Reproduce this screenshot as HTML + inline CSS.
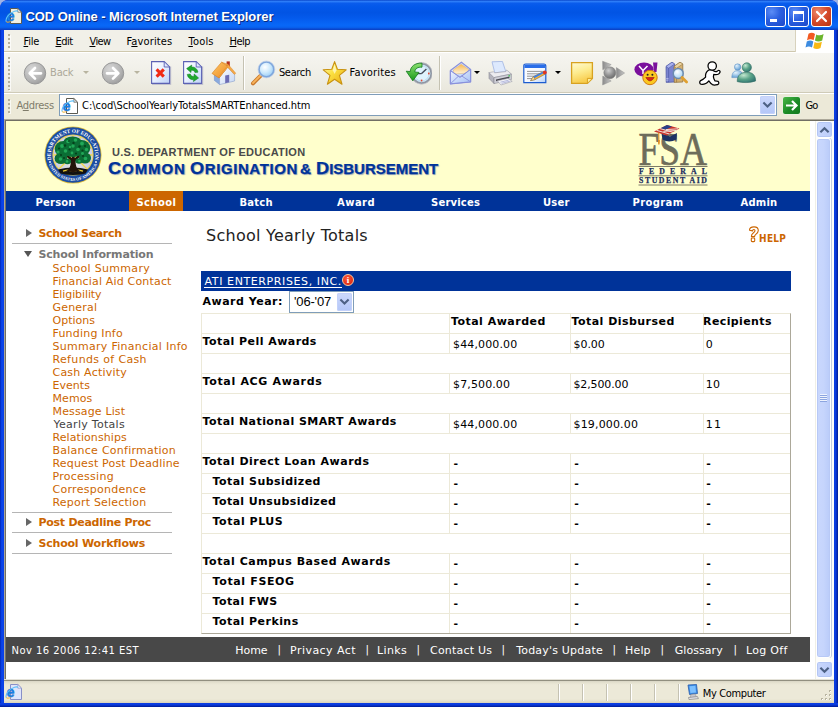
<!DOCTYPE html>
<html><head><meta charset="utf-8"><title>COD Online</title>
<style>
*{box-sizing:border-box;margin:0;padding:0}
html,body{width:838px;height:707px;overflow:hidden;background:#9fb4e6}
body{position:relative;font-family:"Liberation Sans",sans-serif;font-size:11px;color:#000}
.abs{position:absolute}
#win{position:absolute;left:0;top:0;width:838px;height:707px;background:#0831d9;overflow:hidden;border-radius:8px 8px 0 0}
#titlebar{position:absolute;left:0;top:0;width:838px;height:30px;border-radius:8px 8px 0 0;
 background:linear-gradient(180deg,#0a48cc 0%,#2c7cf8 5%,#0a5cec 11%,#0358ea 22%,#0254e4 42%,#045aec 60%,#0868f8 84%,#0862f0 91%,#0a4cd4 96%,#0a3ec2 100%)}
#title{position:absolute;left:26px;top:8px;font:bold 13px "Liberation Sans",sans-serif;color:#fff;text-shadow:1px 1px 0 #0a2a7a;white-space:nowrap;letter-spacing:.1px}
.tb{position:absolute;top:6px;width:21px;height:21px;border:1px solid #fff;border-radius:3px;
 background:radial-gradient(circle at 30% 25%,#5c8df6 0%,#2a5fe0 45%,#1c48c8 100%)}
.tb.close{background:radial-gradient(circle at 30% 25%,#ee8a6c 0%,#d5492a 50%,#b8330f 100%)}
#chrome{position:absolute;left:4px;top:30px;width:830px;height:90px;background:#ece9d8}
#menubar{position:absolute;left:0;top:0;width:830px;height:22px;background:#f1f0e8;border-bottom:1px solid #cfc8ae}
.mi{position:absolute;top:5px;font-size:11px;white-space:nowrap}
.mi u{text-decoration:underline}
#toolbar{position:absolute;left:0;top:22px;width:830px;height:41px;background:linear-gradient(to bottom,#f6f5f0,#efeee6 60%,#e9e7dc);border-top:1px solid #fff;border-bottom:1px solid #cfcbb8}
#addrbar{position:absolute;left:0;top:63px;width:830px;height:25px;background:#ece9d8;border-top:1px solid #fff}
.grip{position:absolute;width:2px;margin-left:1px;background:repeating-linear-gradient(to bottom,#b4af9b 0,#b4af9b 2px,transparent 2px,transparent 4px);box-shadow:1px 1px 0 rgba(255,255,255,.7)}
#page{position:absolute;left:6px;top:121px;width:810px;height:558px;background:#fff;overflow:hidden;font-family:"DejaVu Sans","Liberation Sans",sans-serif}
#statusbar{position:absolute;left:4px;top:682px;width:830px;height:21px;background:#ece9d8;border-top:1px solid #fff}

#pw{position:absolute;left:-6px;top:-121px;width:838px;height:707px}
.nav{position:absolute;top:191px;height:20px;line-height:20px;width:100px;text-align:center;color:#fff;font-weight:bold;font-size:11px}
.sm{position:absolute;font-size:11px;color:#c60;white-space:nowrap;line-height:13px;letter-spacing:.45px}
.sh{position:absolute;font-size:11px;font-weight:bold;color:#c60;white-space:nowrap;line-height:13px;letter-spacing:.3px}
.sl{position:absolute;left:12px;width:160px;height:1px;background:#b5b5b5}
.tri{position:absolute;width:0;height:0}
.hl{position:absolute;left:202px;width:588px;height:1px;background:#ece9d8}
.vl{position:absolute;width:1px;background:#ece9d8}
.rl{position:absolute;font-size:11px;font-weight:bold;white-space:nowrap;line-height:13px;letter-spacing:.75px}
.rv{position:absolute;font-size:11px;white-space:nowrap;line-height:13px;letter-spacing:.3px}
.ft{position:absolute;top:643px;font-size:11px;color:#fff;white-space:nowrap;line-height:13px;letter-spacing:.55px}

.nv{position:absolute;color:#fff;font-weight:bold;font-size:10px;line-height:13px;white-space:nowrap}
.h1{position:absolute;font-size:16px;color:#222;white-space:nowrap;line-height:20px}
.ati{position:absolute;font-size:11px;color:#fff;white-space:nowrap;line-height:13px}

.ch{position:absolute;font:11px/13px "DejaVu Sans Condensed","Liberation Sans",sans-serif;font-variant-ligatures:none;white-space:nowrap;color:#000}
.ttl{position:absolute;font:bold 13px/15px "Liberation Sans",sans-serif;color:#fff;text-shadow:1px 1px 0 #0a2a7a;white-space:nowrap}
.dept{position:absolute;font:bold 11px/13px "Liberation Sans",sans-serif;color:#4a4a4a;white-space:nowrap}
.cod{position:absolute;font:bold 14px/20px "Liberation Sans",sans-serif;color:#003399;white-space:nowrap;text-shadow:1px 1px 1px #9fa9b8;transform:scaleX(1.07);transform-origin:0 0;-webkit-text-stroke:.25px #003399}
.cod b{font-size:17px}
.hlp{position:absolute;font:bold 10px/12px "DejaVu Sans Condensed","Liberation Sans",sans-serif;color:#cc6600;white-space:nowrap}
.sel{position:absolute;font:13px/15px "Liberation Sans",sans-serif;white-space:nowrap;color:#000}
</style></head><body>
<div id="win">
 <div id="titlebar">
  <div class="tb" style="left:765px"></div>
  <div class="tb" style="left:788px"></div>
  <div class="tb close" style="left:811px"></div>
 </div>
 <div id="chrome">
  <div id="menubar">
   <div class="grip" style="left:3px;top:4px;height:15px"></div>
   <div class="abs" style="left:791px;top:0;width:39px;height:22px;background:#fff;border-left:1px solid #d8d2bd">
    <svg class="abs" style="left:9px;top:1px" width="22" height="20" viewBox="0 0 22 20">
     <path d="M3.5 2.8 C6 1.2 8 1.6 10 3 L8.6 9.2 C6.6 7.9 4.6 7.7 2 9.2 Z" fill="#f25a22"/>
     <path d="M11.3 3.4 C13.5 4.8 16 4.6 18.6 3 L17.2 9.4 C14.6 11 12.2 10.8 9.9 9.6 Z" fill="#6cb52d"/>
     <path d="M1.8 10.4 C4.4 8.9 6.4 9.2 8.3 10.4 L7 16.4 C5 15.2 3 15 0.5 16.4 Z" fill="#3c8be0"/>
     <path d="M9.6 10.9 C11.9 12.1 14.3 12.2 16.9 10.7 L15.5 16.9 C13 18.4 10.6 18.2 8.3 17 Z" fill="#f9b812"/>
    </svg>
   </div>
  </div>
  <div id="toolbar">
   <div class="grip" style="left:3px;top:4px;height:33px"></div>
   <!-- back -->
   <svg class="abs" style="left:19px;top:8px" width="24" height="24" viewBox="0 0 24 24">
    <defs><radialGradient id="gb" cx="35%" cy="30%" r="75%"><stop offset="0" stop-color="#d6d6d6"/><stop offset="0.7" stop-color="#b4b4b4"/><stop offset="1" stop-color="#9c9c9c"/></radialGradient></defs>
    <circle cx="12" cy="12.3" r="10.7" fill="url(#gb)" stroke="#979797" stroke-width="1"/>
    <path d="M18 12.3 H7.5 M12 7 L6.7 12.3 L12 17.6" fill="none" stroke="#fff" stroke-width="2.7" stroke-linecap="round" stroke-linejoin="round"/>
   </svg>
   <div class="abs" style="left:79px;top:18px;border:3px solid transparent;border-top:3px solid #b8b4a0;width:0;height:0"></div>
   <!-- forward -->
   <svg class="abs" style="left:97px;top:8px" width="24" height="24" viewBox="0 0 24 24">
    <circle cx="12" cy="12.3" r="10.7" fill="url(#gb)" stroke="#979797" stroke-width="1"/>
    <path d="M6 12.3 H16.5 M12 7 L17.3 12.3 L12 17.6" fill="none" stroke="#fff" stroke-width="2.7" stroke-linecap="round" stroke-linejoin="round"/>
   </svg>
   <div class="abs" style="left:130px;top:18px;border:3px solid transparent;border-top:3px solid #b8b4a0;width:0;height:0"></div>
   <!-- stop -->
   <svg class="abs" style="left:146px;top:7px" width="22" height="26" viewBox="0 0 22 26">
    <defs><linearGradient id="gpg" x1="0" y1="0" x2="1" y2="1"><stop offset="0" stop-color="#ffffff"/><stop offset=".5" stop-color="#e8f0ff"/><stop offset="1" stop-color="#bcd0f6"/></linearGradient></defs>
    <path d="M2 24.4 H20.6 V6.4" fill="none" stroke="#b8b8c8" stroke-width="1.2" opacity=".8"/>
    <path d="M1.6 1.6 H14.2 L19.6 7 V23.4 H1.6 Z" fill="url(#gpg)" stroke="#5c62b4" stroke-width="1.1"/>
    <path d="M14.2 1.6 V7 H19.6 Z" fill="#dfe8fb" stroke="#5c62b4" stroke-width=".9"/>
    <path d="M6.6 9.4 L13.8 16.6 M13.8 9.4 L6.6 16.6" stroke="#f02a14" stroke-width="3.1" stroke-linecap="butt"/>
   </svg>
   <!-- refresh -->
   <svg class="abs" style="left:178px;top:7px" width="22" height="26" viewBox="0 0 22 26">
    <path d="M2 24.4 H20.6 V6.4" fill="none" stroke="#b8b8c8" stroke-width="1.2" opacity=".8"/>
    <path d="M1.6 1.6 H14.2 L19.6 7 V23.4 H1.6 Z" fill="url(#gpg)" stroke="#5c62b4" stroke-width="1.1"/>
    <path d="M14.2 1.6 V7 H19.6 Z" fill="#dfe8fb" stroke="#5c62b4" stroke-width=".9"/>
    <path d="M16 12.2 C15.4 8.6 12.4 6.6 9.4 7 L9.8 5 L4.6 8.6 L9 12.6 L9.2 10.2 C11 10 12.4 10.8 13 12.6 Z" fill="#1ea82c" stroke="#0c7a1a" stroke-width=".5"/>
    <path d="M5.2 14.4 C5.8 18 8.8 20 11.8 19.6 L11.4 21.6 L16.6 18 L12.2 14 L12 16.4 C10.2 16.6 8.8 15.8 8.2 14 Z" fill="#1ea82c" stroke="#0c7a1a" stroke-width=".5"/>
   </svg>
   <!-- home -->
   <svg class="abs" style="left:207px;top:6px" width="26" height="28" viewBox="0 0 26 28">
    <defs><linearGradient id="grf" x1="0" y1="0" x2="1" y2="1"><stop offset="0" stop-color="#fdc868"/><stop offset="1" stop-color="#ee8a22"/></linearGradient>
    <linearGradient id="gwl" x1="0" y1="0" x2="1" y2="1"><stop offset="0" stop-color="#ffffff"/><stop offset="1" stop-color="#c4d6f4"/></linearGradient></defs>
    <rect x="15.6" y="2.4" width="3.2" height="6" fill="#b4301c"/>
    <path d="M3.4 14.6 L8.6 18 V25.6 L3.4 21.4 Z" fill="#8aaade" stroke="#6a88c4" stroke-width=".5"/>
    <path d="M8.6 18 L16.6 8 L23.6 15.4 V22 L8.6 25.6 Z" fill="url(#gwl)" stroke="#8aa0cc" stroke-width=".6"/>
    <path d="M14.2 24.2 V16.6 L18.2 15.8 V23.2 Z" fill="#6c6cb4"/>
    <path d="M1 14.4 L10.6 3.2 L17 7.4 L8 19 Z" fill="url(#grf)" stroke="#d8801c" stroke-width=".6"/>
    <path d="M10.6 3.2 L17 5.2 L24.8 14.2 L23.4 15.6 L16.8 8.4 L8 19 L7.4 18.2 L16.6 6.8 Z" fill="#f4a848" stroke="#d8801c" stroke-width=".4"/>
   </svg>
   <div class="abs" style="left:239px;top:3px;width:1px;height:34px;background:#c5c2b2;border-right:1px solid #fff;box-sizing:content-box"></div>
   <!-- search -->
   <svg class="abs" style="left:246px;top:7px" width="26" height="26" viewBox="0 0 26 26">
    <defs><radialGradient id="gln" cx="40%" cy="35%" r="65%"><stop offset="0" stop-color="#ffffff"/><stop offset=".55" stop-color="#cfeafc"/><stop offset="1" stop-color="#9fd0f6"/></radialGradient></defs>
    <path d="M3 23.4 L11.4 14.8" stroke="#c8782c" stroke-width="4" stroke-linecap="round"/>
    <path d="M3 23 L11 15" stroke="#f8b45c" stroke-width="1.8" stroke-linecap="round"/>
    <circle cx="16.4" cy="9.4" r="7.4" fill="url(#gln)" stroke="#7ea6dc" stroke-width="1.7"/>
    <circle cx="16.4" cy="9.4" r="8.4" fill="none" stroke="#b4c8e8" stroke-width=".6"/>
   </svg>
   <!-- favorites -->
   <svg class="abs" style="left:318px;top:7px" width="26" height="26" viewBox="0 0 26 26">
    <defs><linearGradient id="gst" x1="0" y1="0" x2="1" y2="1"><stop offset="0" stop-color="#fff9b8"/><stop offset=".45" stop-color="#fbe040"/><stop offset="1" stop-color="#e8a810"/></linearGradient></defs>
    <path d="M12.6 1.6 L15.4 9.2 L24.2 9.8 L17.4 15.4 L20 24.2 L12.6 19.2 L5.4 24.2 L8 15.4 L1.2 9.8 L9.8 9.2 Z" fill="url(#gst)" stroke="#c89212" stroke-width="1.1" stroke-linejoin="round"/>
    <path d="M12.6 4.6 L14.4 10.2 L12.6 14 L10.8 10.2 Z" fill="#fffde0" opacity=".7"/>
   </svg>
   <!-- history -->
   <svg class="abs" style="left:400px;top:8px" width="28" height="25" viewBox="0 0 28 25">
    <defs><linearGradient id="gha" x1="0" y1="0" x2="0" y2="1"><stop offset="0" stop-color="#8ce070"/><stop offset="1" stop-color="#179a1c"/></linearGradient></defs>
    <circle cx="17.6" cy="12.4" r="9.8" fill="#d0ecfb" stroke="#9097a4" stroke-width="2"/>
    <circle cx="17.6" cy="12.4" r="10.8" fill="none" stroke="#c8c8cc" stroke-width=".7"/>
    <circle cx="17.6" cy="12.4" r="7.6" fill="#dff2fd" stroke="#b8d4ec" stroke-width=".8"/>
    <path d="M17.6 12.6 L22.4 8 M17.6 12.6 L13.6 12.6" stroke="#444a58" stroke-width="1.4"/>
    <rect x="24" y="11.6" width="1.6" height="1.8" fill="#e8482c"/><rect x="16.8" y="18.6" width="1.6" height="1.8" fill="#e8482c"/>
    <path d="M18 2.2 C10.6 1.6 6.4 6 6.2 10.6 L2.2 10.2 L8.8 19.8 L15 11.4 L10.8 11 C11 7.8 13.6 5.8 18 6.2 Z" fill="url(#gha)" stroke="#117a1c" stroke-width=".8" stroke-linejoin="round"/>
   </svg>
   <div class="abs" style="left:435px;top:3px;width:1px;height:34px;background:#c5c2b2;border-right:1px solid #fff;box-sizing:content-box"></div>
   <!-- mail -->
   <svg class="abs" style="left:445px;top:8px" width="23" height="24" viewBox="0 0 23 24">
    <defs><linearGradient id="gml" x1="0" y1="0" x2="1" y2="1"><stop offset="0" stop-color="#f2f6ff"/><stop offset="1" stop-color="#a6c2f6"/></linearGradient>
    <linearGradient id="gmp" x1="0" y1="0" x2="0" y2="1"><stop offset="0" stop-color="#f8b850"/><stop offset="1" stop-color="#fff4dc"/></linearGradient></defs>
    <path d="M1.4 9.6 L12.4 1.2 L21.6 8.4 V20.8 L1.4 22.8 Z" fill="url(#gml)" stroke="#8890dc" stroke-width="1.2" stroke-linejoin="round"/>
    <path d="M4.4 8.8 L12.2 3.2 L19.4 8.2 L19 12 L5 13 Z" fill="url(#gmp)" stroke="#d8b070" stroke-width=".5"/>
    <path d="M1.4 9.6 L11 16.4 L21.6 8.4" fill="none" stroke="#8890dc" stroke-width="1.1"/>
    <path d="M1.4 9.6 L11 16.4 L21.6 8.4 V20.8 L1.4 22.8 Z" fill="url(#gml)" stroke="#8890dc" stroke-width="1" stroke-linejoin="round" opacity=".92"/>
    <path d="M1.4 22.8 L9.4 15.2 M21.6 20.8 L12.8 15" fill="none" stroke="#8890dc" stroke-width=".9"/>
   </svg>
   <div class="abs" style="left:470px;top:18px;border:3px solid transparent;border-top:3px solid #000;width:0;height:0"></div>
   <!-- print -->
   <svg class="abs" style="left:483px;top:8px" width="26" height="25" viewBox="0 0 26 25">
    <path d="M5 0.8 L15.4 0.4 L18.8 10.6 L7.8 11.8 Z" fill="#dde9fd" stroke="#9fb4e2" stroke-width=".8"/>
    <path d="M2 11.6 L7 16.6 V22.6 L2 17.4 Z" fill="#b4b4be" stroke="#8a8a94" stroke-width=".6"/>
    <path d="M2 11.6 L6.4 10.8 L7.8 11.8 L18.8 10.6 L19.6 9 L24.4 13 L7 16.6 Z" fill="#ececf0" stroke="#9a9aa4" stroke-width=".6"/>
    <path d="M7 16.6 L24.4 13 V18.6 L7 22.6 Z" fill="#d0d0d8" stroke="#8a8a94" stroke-width=".6"/>
    <path d="M9 18.4 L22.4 15.6 V17.2 L9 20.2 Z" fill="#4a4a52"/>
    <path d="M10.4 19.8 L21 17.4 L25.2 20.4 L14 24 Z" fill="#f6f6fa" stroke="#9a9aa4" stroke-width=".6"/>
    <path d="M13.4 21.2 L21.6 19.2 M14.6 22.4 L22.8 20.2" stroke="#8890c8" stroke-width=".6"/>
    <rect x="21.4" y="14.2" width="1.8" height="1.2" fill="#3bc04a"/>
   </svg>
   <!-- edit -->
   <svg class="abs" style="left:519px;top:10px" width="26" height="21" viewBox="0 0 26 21">
    <defs><linearGradient id="ged" x1="0" y1="0" x2="1" y2="1"><stop offset="0" stop-color="#ffffff"/><stop offset=".6" stop-color="#f2f7ff"/><stop offset="1" stop-color="#b4d0f8"/></linearGradient></defs>
    <path d="M0.8 19.6 V3 Q0.8 1 2.8 1 H20.8 Q22.8 1 22.8 3 V19.6 Z" fill="url(#ged)" stroke="#1c5cd0" stroke-width="1.2"/>
    <path d="M1.4 5 V3 Q1.4 1.6 2.8 1.6 H20.8 Q22.2 1.6 22.2 3 V5 Z" fill="#2a6ee8"/>
    <path d="M4 8.4 H19.6 M4 10.8 H19.6 M4 13.2 H13 M4 15.6 H9" stroke="#8a8a8a" stroke-width=".9"/>
    <path d="M7.6 17.6 L10.4 13.6 L20.6 8.4 L22.2 11.2 L12.2 16.6 Z" fill="#f4b43c" stroke="#7a5a20" stroke-width=".5"/>
    <path d="M10.4 13.6 L20.6 8.4 L21.4 9.8 L11.2 15.2 Z" fill="#3a80ec"/>
    <path d="M7.6 17.6 L10.4 13.6 L12.2 16.6 Z" fill="#f8dca0" stroke="#7a5a20" stroke-width=".4"/>
    <circle cx="21.8" cy="9.4" r="1.9" fill="#e03420"/>
   </svg>
   <div class="abs" style="left:551px;top:18px;border:3px solid transparent;border-top:3px solid #000;width:0;height:0"></div>
   <!-- note -->
   <svg class="abs" style="left:566px;top:8px" width="24" height="24" viewBox="0 0 24 24">
    <defs><linearGradient id="gn" x1="0" y1="0" x2="0.3" y2="1"><stop offset="0" stop-color="#fffbd4"/><stop offset=".5" stop-color="#fdec90"/><stop offset="1" stop-color="#f8cc4c"/></linearGradient></defs>
    <path d="M1.6 1.6 H22.4 V17.4 L17.4 22.4 H1.6 Z" fill="url(#gn)" stroke="#d8a220" stroke-width="1.3"/>
    <path d="M22.4 17.4 H17.4 V22.4 Z" fill="#fdeea0" stroke="#d8a220" stroke-width="1"/>
   </svg>
   <!-- gray messenger -->
   <svg class="abs" style="left:597px;top:7px" width="25" height="26" viewBox="0 0 25 26">
    <defs><radialGradient id="gm" cx="40%" cy="32%" r="70%"><stop offset="0" stop-color="#d0d0d0"/><stop offset=".6" stop-color="#8e8e8e"/><stop offset="1" stop-color="#6a6a6a"/></radialGradient>
    <linearGradient id="gmt" x1="0" y1="0" x2="1" y2="0"><stop offset="0" stop-color="#8a8a8a"/><stop offset="1" stop-color="#c8c8c8"/></linearGradient></defs>
    <path d="M1.6 1.2 L10.2 4.6 L1.8 9.8 Z" fill="url(#gmt)" stroke="#909090" stroke-width=".5"/>
    <path d="M1.8 16 L10.2 21 L1.6 25 Z" fill="url(#gmt)" stroke="#909090" stroke-width=".5"/>
    <path d="M15.4 7.6 L23.6 13 L15.4 18.4 Z" fill="url(#gmt)" stroke="#909090" stroke-width=".5"/>
    <circle cx="8.8" cy="12.8" r="6" fill="url(#gm)" stroke="#787878" stroke-width=".5"/>
   </svg>
   <!-- yahoo -->
   <svg class="abs" style="left:630px;top:9px" width="25" height="24" viewBox="0 0 25 24">
    <ellipse cx="10" cy="7.5" rx="9.6" ry="7" fill="#7a0f9c"/>
    <path d="M19 0.5 H23.5 L22.5 10 H20 Z" fill="#7a0f9c"/>
    <path d="M5 4 L9 8.5 V12 M13.5 4 L9 8.5" stroke="#fff" stroke-width="1.5" fill="none"/>
    <circle cx="16" cy="15.5" r="7.2" fill="#fbc820" stroke="#d07810" stroke-width="1"/>
    <path d="M11.8 15.5 Q16 22.5 20.2 15.5 Z" fill="#d82818" stroke="#801" stroke-width=".5"/>
    <circle cx="13.6" cy="12.8" r="1" fill="#222"/><circle cx="18.4" cy="12.8" r="1" fill="#222"/>
   </svg>
   <!-- research -->
   <svg class="abs" style="left:661px;top:8px" width="24" height="24" viewBox="0 0 24 24">
    <defs><radialGradient id="grl" cx="40%" cy="35%" r="65%"><stop offset="0" stop-color="#ffffff"/><stop offset="1" stop-color="#a8d4f4"/></radialGradient></defs>
    <path d="M1 5.4 L7 1.2 L9.6 3 V21 L1.2 21.4 Z" fill="#7a84d0" stroke="#4a54a0" stroke-width=".7"/>
    <path d="M1 5.4 L7 1.2 L9.6 3 L3.6 7.2 Z" fill="#a8b0ec" stroke="#4a54a0" stroke-width=".5"/>
    <path d="M3.6 7.2 V21.2" stroke="#4a54a0" stroke-width=".6"/><path d="M1.2 17.6 L3.6 17.4 M1.2 19.2 L3.6 19" stroke="#c8ccf4" stroke-width=".7"/>
    <path d="M9 5.4 L15 1.2 L17.8 3 V21 L9.2 21.4 Z" fill="#d4b070" stroke="#8a6c38" stroke-width=".7"/>
    <path d="M9 5.4 L15 1.2 L17.8 3 L11.6 7.2 Z" fill="#ecd4a0" stroke="#8a6c38" stroke-width=".5"/>
    <path d="M11.6 7.2 V21.2" stroke="#8a6c38" stroke-width=".6"/>
    <circle cx="13.2" cy="12.4" r="5" fill="url(#grl)" stroke="#6c8cb0" stroke-width="1.5"/>
    <path d="M17 16.4 L21.6 21" stroke="#e0a030" stroke-width="2.8" stroke-linecap="round"/>
   </svg>
   <!-- aim -->
   <svg class="abs" style="left:695px;top:8px" width="23" height="25" viewBox="0 0 23 25">
    <g fill="#fff" stroke="#000" stroke-width="1.25" stroke-linejoin="round">
     <path d="M9.4 9.2 C7.4 10.6 6.2 13.4 6.6 16.2 C5.4 17.6 3.6 18.8 1.6 19.6 C0.4 20.2 0.4 22.8 1.8 23.2 C4.6 23.6 7.8 22.4 9.8 19.8 C10.8 21.2 12 22.6 13.4 23.6 C15 24.4 18.6 24 19.6 22.8 C20.2 21.6 19.4 20.2 18.2 20.2 L16 19.8 C15.2 18.6 14.6 17.2 14.4 15.8 L14.8 13.4 C16.4 13.8 18.2 13.8 19.6 13 C21 12 21.6 10.6 20.6 9.8 C19.8 9.2 18.6 9.4 18 10.4 C17 11 15.6 10.6 14.4 9.8 C12.8 8.6 10.8 8.4 9.4 9.2 Z"/>
     <circle cx="13.2" cy="5" r="4.2"/>
    </g>
   </svg>
   <!-- msn -->
   <svg class="abs" style="left:727px;top:9px" width="26" height="22" viewBox="0 0 26 22">
    <defs><radialGradient id="gb1" cx="35%" cy="30%" r="75%"><stop offset="0" stop-color="#e4f2fc"/><stop offset="1" stop-color="#5c9cd4"/></radialGradient>
    <radialGradient id="gb2" cx="35%" cy="30%" r="80%"><stop offset="0" stop-color="#c4e8d0"/><stop offset=".5" stop-color="#5aa488"/><stop offset="1" stop-color="#2c6e70"/></radialGradient></defs>
    <circle cx="6.6" cy="5" r="3.2" fill="url(#gb1)" stroke="#5a8cc0" stroke-width=".5"/>
    <path d="M0.8 15.6 C0.8 10.4 3.4 8.6 6.6 8.6 C9.8 8.6 12 10.4 12 15.6 Z" fill="url(#gb1)" stroke="#5a8cc0" stroke-width=".5"/>
    <circle cx="15.8" cy="5.4" r="4.6" fill="url(#gb2)" stroke="#2a6a5c" stroke-width=".6"/>
    <path d="M6.2 19.6 C6.2 12.6 10.6 10.2 15.8 10.2 C21 10.2 24.6 12.6 24.6 19 C19 21 11 21 6.2 19.6 Z" fill="url(#gb2)" stroke="#2a6a5c" stroke-width=".6"/>
   </svg>
   </div>
  <div id="addrbar">
   <div class="grip" style="left:3px;top:5px;height:14px"></div>
   <div class="abs" style="left:55px;top:0px;width:718px;height:22px;background:#fff;border:1px solid #7f9db9"></div>
   <svg class="abs" style="left:57px;top:3px" width="18" height="18" viewBox="0 0 18 18">
 <path d="M5.5 1.5 H12.8 L16.5 5.2 V16.5 H5.5 Z" fill="#ffffff" stroke="#5a5a52" stroke-width="1"/>
 <path d="M12.8 1.5 V5.2 H16.5 Z" fill="#e8e8e8" stroke="#5a5a52" stroke-width=".7"/>
 <text x="1.6" y="14.2" font-family="Liberation Sans,sans-serif" font-weight="bold" font-size="14.5" fill="#1a86ea" stroke="#1466c8" stroke-width=".35">e</text>
 <path d="M1.2 14.6 C0.2 11.5 3.5 6.2 9.5 4.2 C11.2 3.7 12.6 3.8 13 4.6" fill="none" stroke="#5cc0fa" stroke-width="1.1"/>
 <path d="M1.2 14.6 C2 15.6 4 15.2 5.5 14.4" fill="none" stroke="#f2b030" stroke-width="1"/>
</svg>
   <div class="abs" style="left:756px;top:2px;width:15px;height:18px;border-radius:2px;background:linear-gradient(to bottom,#cdd9fc,#b3c6f8);box-shadow:inset 0 0 0 1px #c3d1fa"></div>
   <svg class="abs" style="left:758px;top:7px" width="11" height="8" viewBox="0 0 11 8"><path d="M1.4 1.6 L5.5 5.6 L9.6 1.6" stroke="#4d6185" stroke-width="2.1" fill="none"/></svg>
   <div class="abs" style="left:778px;top:2px;width:19px;height:19px;border:1px solid #e8f0e0;border-radius:3px;background:linear-gradient(135deg,#4cb848,#1a8a26 55%,#127a1e)"></div>
   <svg class="abs" style="left:780px;top:4px" width="15" height="15" viewBox="0 0 15 15"><path d="M2 7.5 H12 M8 3 L12.5 7.5 L8 12" stroke="#fff" stroke-width="2.2" fill="none"/></svg>
  </div>
 </div>
 <div class="abs" style="left:4px;top:119px;width:830px;height:561px;background:#fff;border:1px solid #aca899;border-right:0"></div><div class="abs" style="left:5px;top:120px;width:829px;height:559px;border-left:1px solid #716f64;border-top:1px solid #716f64"></div>
<div id="page"><div id="pw">
<div class="abs" style="left:6px;top:121px;width:804px;height:70px;background:#ffffcc"></div>
<div class="abs" style="left:6px;top:191px;width:804px;height:20px;background:#003399"></div>
<div class="abs" style="left:129px;top:191px;width:54px;height:20px;background:#cc6600"></div>
<div id="f1" class="nv" style="left:35.50px;top:195.5px;letter-spacing:0.200px;">Person</div>
<div id="f2" class="nv" style="left:136.50px;top:195.5px;letter-spacing:0.400px;">School</div>
<div id="f3" class="nv" style="left:239.50px;top:195.5px;letter-spacing:0.200px;">Batch</div>
<div id="f4" class="nv" style="left:337.00px;top:195.5px;letter-spacing:0.450px;">Award</div>
<div id="f5" class="nv" style="left:431.00px;top:195.5px;letter-spacing:0.196px;">Services</div>
<div id="f6" class="nv" style="left:543.00px;top:195.5px;letter-spacing:0.200px;">User</div>
<div id="f7" class="nv" style="left:632.50px;top:195.5px;letter-spacing:0.371px;">Program</div>
<div id="f8" class="nv" style="left:740.50px;top:195.5px;letter-spacing:0.200px;">Admin</div>
<svg class="abs" style="left:44px;top:126px" width="58" height="58" viewBox="-29 -29 58 58">
 <defs>
  <path id="arcT" d="M -21.63 4.99 A 22.2 22.2 0 1 1 21.63 4.99"/>
  <path id="arcB" d="M -24.18 9.28 A 25.9 25.9 0 0 0 24.18 9.28"/>
  <radialGradient id="gsl" cx="50%" cy="50%" r="50%"><stop offset="0" stop-color="#f6f3d8"/><stop offset="1" stop-color="#c9cde6"/></radialGradient>
 </defs>
 <circle r="28.6" fill="#e0bd3a"/>
 <circle r="27.8" fill="#1c4da3"/>
 <circle r="20.6" fill="#eed24a"/>
 <circle r="19.6" fill="url(#gsl)"/>
 <g stroke="#f2d648" stroke-width="1.3">
  <path d="M0 0 L0 -19.5 M0 0 L7.5 -18 M0 0 L13.8 -13.8 M0 0 L18 -7.5 M0 0 L19.5 0 M0 0 L18 7.5 M0 0 L13.8 13.8 M0 0 L-7.5 -18 M0 0 L-13.8 -13.8 M0 0 L-18 -7.5 M0 0 L-19.5 0 M0 0 L-18 7.5 M0 0 L-13.8 13.8"/>
 </g>
 <path d="M-15 14.5 Q0 10.5 15 14.5 L12.5 18.5 Q0 21.5 -12.5 18.5 Z" fill="#111"/>
 <path d="M-10 16.2 Q-4 14.2 0 16.4 Q4 14.2 10 16.2" stroke="#e8c832" stroke-width="1.3" fill="none"/>
 <path d="M-9.5 17 C-4 15.5 -2.2 12 -2.2 6 L-8 0 L-6.5 -1.2 L-1.2 3 L-0.6 -4 L1.4 -4 L1.8 3.2 L7 -1.5 L8.4 -0.2 L2.6 6.4 C2.6 12 4.5 15.5 9.5 17 L4 16 L0 17.6 L-4 16 Z" fill="#23140a"/>
 <g fill="#0b6e35">
  <ellipse cx="-9.5" cy="-6" rx="8.8" ry="8"/><ellipse cx="8.5" cy="-7" rx="8.8" ry="8"/><ellipse cx="-0.5" cy="-12" rx="9.5" ry="6.6"/>
  <ellipse cx="-12" cy="3.5" rx="6.4" ry="5.6"/><ellipse cx="12" cy="3" rx="6" ry="5.6"/><ellipse cx="0" cy="-3.5" rx="8" ry="5.5"/>
  <ellipse cx="-5.5" cy="6.5" rx="3.6" ry="2.8"/><ellipse cx="6" cy="6" rx="3.6" ry="2.8"/>
 </g>
 <g fill="#21a857">
  <circle cx="-11" cy="-9" r="1.9"/><circle cx="-5" cy="-13.5" r="1.8"/><circle cx="2.5" cy="-15" r="1.8"/><circle cx="9" cy="-11.5" r="1.9"/><circle cx="13.5" cy="-5.5" r="1.7"/><circle cx="-15" cy="-3" r="1.6"/><circle cx="-7.5" cy="-4" r="1.8"/><circle cx="5" cy="-5.5" r="1.8"/><circle cx="-12.5" cy="4" r="1.8"/><circle cx="12.5" cy="3.5" r="1.8"/><circle cx="0" cy="-9" r="1.7"/><circle cx="-1" cy="-2" r="1.4"/><circle cx="-6" cy="6.4" r="1.3"/><circle cx="6.4" cy="6" r="1.3"/><circle cx="9.5" cy="-1.5" r="1.4"/><circle cx="-3" cy="-8" r="1.2"/>
 </g>
 <g fill="#04401b">
  <circle cx="-8" cy="-9.5" r="1.2"/><circle cx="0.5" cy="-12" r="1.2"/><circle cx="6.5" cy="-8.5" r="1.2"/><circle cx="-12" cy="0" r="1.1"/><circle cx="9.5" cy="-4.5" r="1.1"/><circle cx="-3.5" cy="-5.5" r="1.1"/><circle cx="3" cy="-1.5" r="1.1"/><circle cx="-9" cy="3" r="1"/><circle cx="10" cy="1" r="1"/><circle cx="-4" cy="-14" r="0.9"/><circle cx="12" cy="-9" r="1"/><circle cx="-14" cy="-6.5" r="1"/>
 </g>
 <text font-family="Liberation Serif,serif" font-weight="bold" font-size="5.4" fill="#fff"><textPath href="#arcT" startOffset="0" textLength="79.3" lengthAdjust="spacingAndGlyphs">DEPARTMENT OF EDUCATION</textPath></text>
 <text font-family="Liberation Serif,serif" font-weight="bold" font-size="4.3" fill="#fff"><textPath href="#arcB" startOffset="0" textLength="61.9" lengthAdjust="spacingAndGlyphs">UNITED STATES OF AMERICA</textPath></text>
 <circle cx="-23.0" cy="7.0" r="0.9" fill="#fff"/><circle cx="23.0" cy="7.0" r="0.9" fill="#fff"/>
</svg>
<div id="f9" class="dept" style="left:112.00px;top:145.7px;letter-spacing:0.265px;">U.S. DEPARTMENT OF EDUCATION</div>
<div id="f10" class="cod" style="left:108.00px;top:158.8px;letter-spacing:0.880px;"><b>C</b>OMMON</div>
<div id="f11" class="cod" style="left:189.50px;top:158.8px;letter-spacing:0.560px;"><b>O</b>RIGINATION</div>
<div id="f12" class="cod" style="left:300.00px;top:158.8px;letter-spacing:0.000px;font-size:15.5px;transform:none">&amp;</div>
<div id="f13" class="cod" style="left:315.50px;top:158.8px;letter-spacing:0.001px;"><b>D</b>ISBURSEMENT</div>
<svg class="abs" style="left:636px;top:122px" width="76" height="66" viewBox="0 0 76 66">
 <text x="2.4" y="42.6" font-family="Liberation Serif,serif" font-size="46.5" fill="#6d6c5a" stroke="#6d6c5a" stroke-width="0.7" textLength="68.6" lengthAdjust="spacingAndGlyphs">FSA</text>
 <path d="M2.5 44.5 H71.5" stroke="#6d6c5a" stroke-width="0.9"/>
 <text x="3" y="51.8" font-family="Liberation Serif,serif" font-weight="bold" font-size="7.8" fill="#1b2d5e" stroke="#1b2d5e" stroke-width=".25" textLength="68" lengthAdjust="spacing">FEDERAL</text>
 <path d="M2.5 53.8 H71.5" stroke="#6d6c5a" stroke-width="0.9"/>
 <text x="3" y="61.2" font-family="Liberation Serif,serif" font-weight="bold" font-size="7.8" fill="#1b2d5e" stroke="#1b2d5e" stroke-width=".25" textLength="68" lengthAdjust="spacing">STUDENT AID</text>
 <path d="M2.5 63 H71.5" stroke="#6d6c5a" stroke-width="0.9"/>
 <path d="M25.5 11.5 L34 14.5 L41 11 L40.5 17.5 Q33 21.5 26.5 17.5 Z" fill="#1d3364"/>
 <path d="M18 9.5 L31 3 L43.5 6.5 L30.5 13.5 Z" fill="#c8342c"/>
 <path d="M24.5 6.2 L31 3 L36 4.4 L29.5 7.8 Z" fill="#27418a"/>
 <path d="M20.5 8.3 L33.5 12 M24 6.6 L36.8 10.2 M30 7.6 L42 6.8 M27.4 9.4 L40 8.5" stroke="#f4efe6" stroke-width="0.9"/>
 <path d="M22.7 10.5 L22.9 20.5" stroke="#e08a1c" stroke-width="1.1"/>
 <path d="M22 18 L23.8 18 L23.6 22.5 L22.2 22.5 Z" fill="#e08a1c"/>
</svg>
<div class="tri" style="left:26px;top:229px;border:4px solid transparent;border-left:6px solid #666;border-right:0"></div>
<div id="f14" class="sh" style="left:38.50px;top:227px;letter-spacing:-0.342px;">School Search</div>
<div class="sl" style="top:243px"></div>
<div class="tri" style="left:24px;top:251px;border:4px solid transparent;border-top:6px solid #555;border-bottom:0"></div>
<div id="f15" class="sh" style="left:38.50px;top:248px;letter-spacing:-0.173px;color:#777">School Information</div>
<div id="f16" class="sm" style="left:52.50px;top:262px;letter-spacing:0.313px;">School Summary</div>
<div id="f17" class="sm" style="left:52.50px;top:275px;letter-spacing:0.170px;">Financial Aid Contact</div>
<div id="f18" class="sm" style="left:52.50px;top:288px;letter-spacing:-0.100px;">Eligibility</div>
<div id="f19" class="sm" style="left:52.50px;top:301px;letter-spacing:0.200px;">General</div>
<div id="f20" class="sm" style="left:52.50px;top:314px;letter-spacing:0.005px;">Options</div>
<div id="f21" class="sm" style="left:52.50px;top:327px;letter-spacing:0.200px;">Funding Info</div>
<div id="f22" class="sm" style="left:52.50px;top:340px;letter-spacing:0.281px;">Summary Financial Info</div>
<div id="f23" class="sm" style="left:52.50px;top:353px;letter-spacing:0.352px;">Refunds of Cash</div>
<div id="f24" class="sm" style="left:52.50px;top:366px;letter-spacing:0.200px;">Cash Activity</div>
<div id="f25" class="sm" style="left:52.50px;top:379px;letter-spacing:0.040px;">Events</div>
<div id="f26" class="sm" style="left:52.50px;top:392px;letter-spacing:0.100px;">Memos</div>
<div id="f27" class="sm" style="left:52.50px;top:405px;letter-spacing:0.148px;">Message List</div>
<div id="f28" class="sm" style="left:53.50px;top:418px;letter-spacing:0.283px;color:#444">Yearly Totals</div>
<div id="f29" class="sm" style="left:52.50px;top:431px;letter-spacing:0.076px;">Relationships</div>
<div id="f30" class="sm" style="left:52.50px;top:444px;letter-spacing:0.252px;">Balance Confirmation</div>
<div id="f31" class="sm" style="left:52.50px;top:457px;letter-spacing:0.180px;">Request Post Deadline</div>
<div id="f32" class="sm" style="left:52.50px;top:470px;letter-spacing:0.264px;">Processing</div>
<div id="f33" class="sm" style="left:52.50px;top:483px;letter-spacing:0.282px;">Correspondence</div>
<div id="f34" class="sm" style="left:52.50px;top:496px;letter-spacing:0.208px;">Report Selection</div>
<div class="sl" style="top:512px"></div>
<div class="tri" style="left:26px;top:518px;border:4px solid transparent;border-left:6px solid #666;border-right:0"></div>
<div id="f35" class="sh" style="left:38.50px;top:516px;letter-spacing:-0.271px;">Post Deadline Proc</div>
<div class="sl" style="top:532px"></div>
<div class="tri" style="left:26px;top:539px;border:4px solid transparent;border-left:6px solid #666;border-right:0"></div>
<div id="f36" class="sh" style="left:38.50px;top:537px;letter-spacing:-0.204px;">School Workflows</div>
<div class="sl" style="top:553px"></div>
<div id="f37" class="h1" style="left:206.10px;top:225.5px;letter-spacing:0.253px;">School Yearly Totals</div>
<svg class="abs" style="left:748px;top:226px" width="12" height="17" viewBox="0 0 12 17">
 <path d="M1.5 4.2 C1.5 1.6 4 0.9 6 0.9 C8.6 0.9 10.3 2.4 10.3 4.6 C10.3 6.6 9 7.6 7.6 8.6 C6.8 9.2 6.6 9.8 6.6 10.6 L3.4 10.6 C3.4 9 3.8 8 5.2 7 C6.4 6.1 7 5.6 7 4.7 C7 3.9 6.5 3.5 5.8 3.5 C5 3.5 4.6 4 4.6 4.9 Z" fill="#fff" stroke="#cc6600" stroke-width="1.1" stroke-linejoin="round"/>
 <rect x="3.3" y="12" width="3.4" height="3.6" rx="0.8" fill="#fff" stroke="#cc6600" stroke-width="1.1"/>
</svg>
<div id="f38" class="hlp" style="left:759.10px;top:233px;letter-spacing:0.267px;">HELP</div>
<div class="abs" style="left:201px;top:271px;width:590px;height:20px;background:#003399"></div>
<div id="f39" class="ati" style="left:204.60px;top:275px;letter-spacing:0.600px;">ATI ENTERPRISES, INC.</div>
<div class="abs ul" style="left:204px;top:287px;width:138px;height:1px;background:#fff"></div>
<div class="abs ic" style="left:342px;top:274px;width:12px;height:12px;border-radius:6px;background:radial-gradient(circle at 40% 35%,#ff5a3a,#d01808);border:1px solid #f8c8a0;color:#fff;font:bold 9px/10px 'Liberation Serif',serif;text-align:center">i</div>
<div id="f40" class="rl" style="left:202.50px;top:295px;letter-spacing:0.500px;">Award Year:</div>
<div class="abs" style="left:289px;top:291px;width:65px;height:22px;border:1px solid #7f9db9;background:#fff"></div>
<div id="f41" class="sel" style="left:294.00px;top:294px;letter-spacing:-0.165px;">'06-'07</div>
<div class="abs" style="left:337px;top:293px;width:15px;height:18px;border-radius:2px;background:linear-gradient(to bottom,#cdd9fc,#b3c6f8);box-shadow:inset 0 0 0 1px #c3d1fa"></div>
<svg class="abs" style="left:339px;top:298px" width="11" height="8" viewBox="0 0 11 8"><path d="M1.4 1.6 L5.5 5.6 L9.6 1.6" stroke="#4d6185" stroke-width="2.1" fill="none"/></svg>
<div class="abs" style="left:201px;top:313px;width:590px;height:321px;border:1px solid #ece9d8;border-right-color:#aca899;border-bottom-color:#aca899"></div>
<div class="hl" style="top:333px"></div>
<div class="hl" style="top:353px"></div>
<div class="hl" style="top:373px"></div>
<div class="hl" style="top:393px"></div>
<div class="hl" style="top:413px"></div>
<div class="hl" style="top:433px"></div>
<div class="hl" style="top:453px"></div>
<div class="hl" style="top:473px"></div>
<div class="hl" style="top:493px"></div>
<div class="hl" style="top:513px"></div>
<div class="hl" style="top:533px"></div>
<div class="hl" style="top:553px"></div>
<div class="hl" style="top:573px"></div>
<div class="hl" style="top:593px"></div>
<div class="hl" style="top:613px"></div>
<div class="vl" style="left:449px;top:313px;height:20px"></div>
<div id="f42" class="rl" style="left:450.90px;top:315px;letter-spacing:0.484px;">Total Awarded</div>
<div class="vl" style="left:570px;top:313px;height:20px"></div>
<div id="f43" class="rl" style="left:571.50px;top:315px;letter-spacing:0.460px;">Total Disbursed</div>
<div class="vl" style="left:703px;top:313px;height:20px"></div>
<div id="f44" class="rl" style="left:703.10px;top:315px;letter-spacing:0.382px;">Recipients</div>
<div id="f45" class="rl" style="left:202.50px;top:335px;letter-spacing:0.450px;">Total Pell Awards</div>
<div class="vl" style="left:449px;top:333px;height:20px"></div>
<div id="f46" class="rv" style="left:453.10px;top:338px;letter-spacing:0.130px;">$44,000.00</div>
<div class="vl" style="left:570px;top:333px;height:20px"></div>
<div id="f47" class="rv" style="left:573.50px;top:338px;letter-spacing:-0.050px;">$0.00</div>
<div class="vl" style="left:703px;top:333px;height:20px"></div>
<div id="f48" class="rv" style="left:705.70px;top:338px;letter-spacing:0.000px;">0</div>
<div id="f49" class="rl" style="left:202.50px;top:375px;letter-spacing:0.666px;">Total ACG Awards</div>
<div class="vl" style="left:449px;top:373px;height:20px"></div>
<div id="f50" class="rv" style="left:453.10px;top:378px;letter-spacing:0.111px;">$7,500.00</div>
<div class="vl" style="left:570px;top:373px;height:20px"></div>
<div id="f51" class="rv" style="left:573.50px;top:378px;letter-spacing:-0.125px;">$2,500.00</div>
<div class="vl" style="left:703px;top:373px;height:20px"></div>
<div id="f52" class="rv" style="left:705.70px;top:378px;letter-spacing:0.400px;">10</div>
<div id="f53" class="rl" style="left:202.50px;top:415px;letter-spacing:0.431px;">Total National SMART Awards</div>
<div class="vl" style="left:449px;top:413px;height:20px"></div>
<div id="f54" class="rv" style="left:453.10px;top:418px;letter-spacing:0.130px;">$44,000.00</div>
<div class="vl" style="left:570px;top:413px;height:20px"></div>
<div id="f55" class="rv" style="left:573.50px;top:418px;letter-spacing:0.162px;">$19,000.00</div>
<div class="vl" style="left:703px;top:413px;height:20px"></div>
<div id="f56" class="rv" style="left:705.70px;top:418px;letter-spacing:1.400px;">11</div>
<div id="f57" class="rl" style="left:202.50px;top:455px;letter-spacing:0.505px;">Total Direct Loan Awards</div>
<div class="vl" style="left:449px;top:453px;height:20px"></div>
<div class="rv" style="left:453.5px;top:457px;font-weight:bold">-</div>
<div class="vl" style="left:570px;top:453px;height:20px"></div>
<div class="rv" style="left:574.3px;top:457px;font-weight:bold">-</div>
<div class="vl" style="left:703px;top:453px;height:20px"></div>
<div class="rv" style="left:706.2px;top:457px;font-weight:bold">-</div>
<div id="f58" class="rl" style="left:212.50px;top:475px;letter-spacing:0.447px;">Total Subsidized</div>
<div class="vl" style="left:449px;top:473px;height:20px"></div>
<div class="rv" style="left:453.5px;top:477px;font-weight:bold">-</div>
<div class="vl" style="left:570px;top:473px;height:20px"></div>
<div class="rv" style="left:574.3px;top:477px;font-weight:bold">-</div>
<div class="vl" style="left:703px;top:473px;height:20px"></div>
<div class="rv" style="left:706.2px;top:477px;font-weight:bold">-</div>
<div id="f59" class="rl" style="left:212.50px;top:495px;letter-spacing:0.398px;">Total Unsubsidized</div>
<div class="vl" style="left:449px;top:493px;height:20px"></div>
<div class="rv" style="left:453.5px;top:497px;font-weight:bold">-</div>
<div class="vl" style="left:570px;top:493px;height:20px"></div>
<div class="rv" style="left:574.3px;top:497px;font-weight:bold">-</div>
<div class="vl" style="left:703px;top:493px;height:20px"></div>
<div class="rv" style="left:706.2px;top:497px;font-weight:bold">-</div>
<div id="f60" class="rl" style="left:212.50px;top:515px;letter-spacing:0.533px;">Total PLUS</div>
<div class="vl" style="left:449px;top:513px;height:20px"></div>
<div class="rv" style="left:453.5px;top:517px;font-weight:bold">-</div>
<div class="vl" style="left:570px;top:513px;height:20px"></div>
<div class="rv" style="left:574.3px;top:517px;font-weight:bold">-</div>
<div class="vl" style="left:703px;top:513px;height:20px"></div>
<div class="rv" style="left:706.2px;top:517px;font-weight:bold">-</div>
<div id="f61" class="rl" style="left:202.50px;top:555px;letter-spacing:0.555px;">Total Campus Based Awards</div>
<div class="vl" style="left:449px;top:553px;height:20px"></div>
<div class="rv" style="left:453.5px;top:557px;font-weight:bold">-</div>
<div class="vl" style="left:570px;top:553px;height:20px"></div>
<div class="rv" style="left:574.3px;top:557px;font-weight:bold">-</div>
<div class="vl" style="left:703px;top:553px;height:20px"></div>
<div class="rv" style="left:706.2px;top:557px;font-weight:bold">-</div>
<div id="f62" class="rl" style="left:212.50px;top:575px;letter-spacing:0.640px;">Total FSEOG</div>
<div class="vl" style="left:449px;top:573px;height:20px"></div>
<div class="rv" style="left:453.5px;top:577px;font-weight:bold">-</div>
<div class="vl" style="left:570px;top:573px;height:20px"></div>
<div class="rv" style="left:574.3px;top:577px;font-weight:bold">-</div>
<div class="vl" style="left:703px;top:573px;height:20px"></div>
<div class="rv" style="left:706.2px;top:577px;font-weight:bold">-</div>
<div id="f63" class="rl" style="left:212.50px;top:595px;letter-spacing:0.413px;">Total FWS</div>
<div class="vl" style="left:449px;top:593px;height:20px"></div>
<div class="rv" style="left:453.5px;top:597px;font-weight:bold">-</div>
<div class="vl" style="left:570px;top:593px;height:20px"></div>
<div class="rv" style="left:574.3px;top:597px;font-weight:bold">-</div>
<div class="vl" style="left:703px;top:593px;height:20px"></div>
<div class="rv" style="left:706.2px;top:597px;font-weight:bold">-</div>
<div id="f64" class="rl" style="left:212.50px;top:615px;letter-spacing:0.450px;">Total Perkins</div>
<div class="vl" style="left:449px;top:613px;height:20px"></div>
<div class="rv" style="left:453.5px;top:617px;font-weight:bold">-</div>
<div class="vl" style="left:570px;top:613px;height:20px"></div>
<div class="rv" style="left:574.3px;top:617px;font-weight:bold">-</div>
<div class="vl" style="left:703px;top:613px;height:20px"></div>
<div class="rv" style="left:706.2px;top:617px;font-weight:bold">-</div>
<div class="abs" style="left:6px;top:637px;width:804px;height:25px;background:#484848"></div>
<div id="f65" class="ft" style="left:11.50px;top:644px;letter-spacing:0.455px;font-size:10px">Nov 16 2006 12:41 EST</div>
<div id="f66" class="ft" style="left:235.30px;top:644px;letter-spacing:-0.064px;">Home</div>
<div id="f67" class="ft" style="left:290.10px;top:644px;letter-spacing:0.440px;">Privacy Act</div>
<div id="f68" class="ft" style="left:377.10px;top:644px;letter-spacing:0.350px;">Links</div>
<div id="f69" class="ft" style="left:430.00px;top:644px;letter-spacing:0.221px;">Contact Us</div>
<div id="f70" class="ft" style="left:516.20px;top:644px;letter-spacing:0.200px;">Today's Update</div>
<div id="f71" class="ft" style="left:625.10px;top:644px;letter-spacing:0.135px;">Help</div>
<div id="f72" class="ft" style="left:674.70px;top:644px;letter-spacing:0.058px;">Glossary</div>
<div id="f73" class="ft" style="left:746.10px;top:644px;letter-spacing:0.268px;">Log Off</div>
<div id="f74" class="ft" style="left:277.50px;top:642.5px;letter-spacing:0.000px;font-size:10.5px">|</div>
<div id="f75" class="ft" style="left:365.50px;top:642.5px;letter-spacing:0.000px;font-size:10.5px">|</div>
<div id="f76" class="ft" style="left:416.50px;top:642.5px;letter-spacing:0.000px;font-size:10.5px">|</div>
<div id="f77" class="ft" style="left:501.50px;top:642.5px;letter-spacing:0.000px;font-size:10.5px">|</div>
<div id="f78" class="ft" style="left:612.50px;top:642.5px;letter-spacing:0.000px;font-size:10.5px">|</div>
<div id="f79" class="ft" style="left:660.50px;top:642.5px;letter-spacing:0.000px;font-size:10.5px">|</div>
<div id="f80" class="ft" style="left:733.50px;top:642.5px;letter-spacing:0.000px;font-size:10.5px">|</div>
</div></div>
<div class="abs" style="left:815px;top:121px;width:19px;height:558px;background:#fdfdfa;border-left:1px solid #f0efe6"></div>
<div class="abs" style="left:816px;top:121px;width:17px;height:17px;border:1px solid #fff;border-radius:3px;background:linear-gradient(to right,#c9d7fd,#bccdfa);box-shadow:inset 0 0 0 1px #b4c6f4"></div>
<svg class="abs" style="left:819px;top:126px" width="11" height="8" viewBox="0 0 11 8"><path d="M1.4 6.2 L5.5 2.2 L9.6 6.2" stroke="#4d6185" stroke-width="2.2" fill="none"/></svg>
<div class="abs" style="left:816px;top:138px;width:15px;height:520px;border:1px solid #fff;border-radius:3px;background:linear-gradient(to right,#c9d7fd 0%,#c6d5fc 50%,#b9cbf9 100%);box-shadow:inset 0 0 0 1px #b8c9f6,1px 0 0 #c4cde0"></div>
<div class="abs" style="left:820px;top:394px;width:7px;height:1px;background:#eef3fe;box-shadow:0 1px 0 #8ca5e0,0 2px 0 #eef3fe,0 3px 0 #8ca5e0,0 4px 0 #eef3fe,0 5px 0 #8ca5e0,0 6px 0 #eef3fe,0 7px 0 #8ca5e0"></div>
<div class="abs" style="left:816px;top:661px;width:17px;height:17px;border:1px solid #fff;border-radius:3px;background:linear-gradient(to right,#c9d7fd,#bccdfa);box-shadow:inset 0 0 0 1px #b4c6f4"></div>
<svg class="abs" style="left:819px;top:666px" width="11" height="8" viewBox="0 0 11 8"><path d="M1.4 1.8 L5.5 5.8 L9.6 1.8" stroke="#4d6185" stroke-width="2.2" fill="none"/></svg>
<div class="abs" style="left:4px;top:679px;width:830px;height:24px;background:linear-gradient(to bottom,#e4e2d8 0,#e4e2d8 1px,#918f80 1px,#918f80 2px,#d9d6c5 2px,#e6e3d1 4px,#ece9d8 6px,#ece9d8 20px,#e4e0cc 22px,#d8d2ba 24px)"></div>
<div class="abs" style="left:558px;top:684px;width:1px;height:17px;background:#c5c2b2;box-shadow:1px 0 0 #fff"></div>
<div class="abs" style="left:582px;top:684px;width:1px;height:17px;background:#c5c2b2;box-shadow:1px 0 0 #fff"></div>
<div class="abs" style="left:606px;top:684px;width:1px;height:17px;background:#c5c2b2;box-shadow:1px 0 0 #fff"></div>
<div class="abs" style="left:630px;top:684px;width:1px;height:17px;background:#c5c2b2;box-shadow:1px 0 0 #fff"></div>
<div class="abs" style="left:654px;top:684px;width:1px;height:17px;background:#c5c2b2;box-shadow:1px 0 0 #fff"></div>
<div class="abs" style="left:678px;top:684px;width:1px;height:17px;background:#c5c2b2;box-shadow:1px 0 0 #fff"></div>
<svg class="abs" style="left:5px;top:683px" width="18" height="18" viewBox="0 0 18 18">
 <path d="M5.5 1.5 H12.8 L16.5 5.2 V16.5 H5.5 Z" fill="#dfe4fb" stroke="#8890c8" stroke-width="1"/>
 <path d="M12.8 1.5 V5.2 H16.5 Z" fill="#f4f6ff" stroke="#8890c8" stroke-width=".7"/>
 <text x="1.6" y="14.2" font-family="Liberation Sans,sans-serif" font-weight="bold" font-size="14.5" fill="#1a86ea" stroke="#1466c8" stroke-width=".35">e</text>
 <path d="M1.2 14.6 C0.2 11.5 3.5 6.2 9.5 4.2 C11.2 3.7 12.6 3.8 13 4.6" fill="none" stroke="#5cc0fa" stroke-width="1.1"/>
 <path d="M1.2 14.6 C2 15.6 4 15.2 5.5 14.4" fill="none" stroke="#f2b030" stroke-width="1"/>
</svg>
<svg class="abs" style="left:686px;top:684px" width="13" height="16" viewBox="0 0 13 16">
 <path d="M2 1 L10.5 0.5 L11.5 9.5 L3.5 10.5 Z" fill="#3a8ee8" stroke="#2a5aa8" stroke-width=".8"/>
 <path d="M3.4 2.2 L9.4 1.8 L10 8.4 L4.4 9 Z" fill="#7cc0ff"/>
 <path d="M5 10.5 L9 10 L10.5 13 L4 13.8 Z" fill="#c8c8d0" stroke="#888" stroke-width=".5"/>
 <path d="M2.5 13.5 L11.5 12.6 L12.4 14.6 L3 15.6 Z" fill="#e4e4ea" stroke="#777" stroke-width=".6"/>
</svg>
<svg class="abs" style="left:820px;top:689px" width="13" height="13" viewBox="0 0 13 13">
 <g fill="#b8b4a0"><rect x="9" y="9" width="2" height="2"/><rect x="5" y="9" width="2" height="2"/><rect x="1" y="9" width="2" height="2"/><rect x="9" y="5" width="2" height="2"/><rect x="5" y="5" width="2" height="2"/><rect x="9" y="1" width="2" height="2"/></g>
 <g fill="#fff"><rect x="10" y="10" width="1" height="1"/><rect x="6" y="10" width="1" height="1"/><rect x="2" y="10" width="1" height="1"/><rect x="10" y="6" width="1" height="1"/><rect x="6" y="6" width="1" height="1"/><rect x="10" y="2" width="1" height="1"/></g>
</svg>
<div class="abs" style="left:0;top:30px;width:4px;height:677px;background:linear-gradient(to right,#0026b8,#0a46ee 45%,#0b3fe2)"></div><div class="abs" style="left:834px;top:30px;width:4px;height:677px;background:linear-gradient(to right,#0b3ee2,#0a3ce0 35%,#0529b8 75%,#001b8c)"></div><div class="abs" style="left:0;top:703px;width:838px;height:4px;background:linear-gradient(to bottom,#0b3ee2,#0a3ce0 35%,#0529b8 75%,#001b8c)"></div>
<div class="abs" style="left:0;top:0;width:838px;height:707px;pointer-events:none">
<svg class="abs" style="left:5px;top:7px" width="18" height="18" viewBox="0 0 18 18">
 <path d="M5.5 1.5 H12.8 L16.5 5.2 V16.5 H5.5 Z" fill="#f1efe2" stroke="#5a5a52" stroke-width="1"/>
 <path d="M12.8 1.5 V5.2 H16.5 Z" fill="#ffffff" stroke="#5a5a52" stroke-width=".7"/>
 <text x="1.6" y="14.2" font-family="Liberation Sans,sans-serif" font-weight="bold" font-size="14.5" fill="#1a86ea" stroke="#1466c8" stroke-width=".35">e</text>
 <path d="M1.2 14.6 C0.2 11.5 3.5 6.2 9.5 4.2 C11.2 3.7 12.6 3.8 13 4.6" fill="none" stroke="#5cc0fa" stroke-width="1.1"/>
 <path d="M1.2 14.6 C2 15.6 4 15.2 5.5 14.4" fill="none" stroke="#f2b030" stroke-width="1"/>
</svg>
<svg class="abs" style="left:765px;top:6px" width="67" height="21" viewBox="0 0 67 21">
 <rect x="5" y="13" width="7" height="3" fill="#fff"/>
 <rect x="28.5" y="5.5" width="10" height="10" fill="none" stroke="#fff" stroke-width="1"/><rect x="28" y="5" width="11" height="3" fill="#fff"/>
 <path d="M52 6 L61 15 M61 6 L52 15" stroke="#fff" stroke-width="2.2" stroke-linecap="round"/>
</svg>
<div id="f81" class="ttl" style="left:25.50px;top:9px;letter-spacing:-0.069px;">COD Online - Microsoft Internet Explorer</div>
<div id="f82" class="ch" style="left:23.50px;top:35px;letter-spacing:-0.194px;"><u>F</u>ile</div>
<div id="f83" class="ch" style="left:55.50px;top:35px;letter-spacing:-0.527px;"><u>E</u>dit</div>
<div id="f84" class="ch" style="left:89.50px;top:35px;letter-spacing:-0.606px;"><u>V</u>iew</div>
<div id="f85" class="ch" style="left:126.50px;top:35px;letter-spacing:0.138px;">F<u>a</u>vorites</div>
<div id="f86" class="ch" style="left:188.50px;top:35px;letter-spacing:0.200px;"><u>T</u>ools</div>
<div id="f87" class="ch" style="left:229.50px;top:35px;letter-spacing:-0.527px;"><u>H</u>elp</div>
<div id="f88" class="ch" style="left:50.10px;top:66px;letter-spacing:-0.240px;color:#aca899">Back</div>
<div id="f89" class="ch" style="left:278.90px;top:66px;letter-spacing:-0.320px;">Search</div>
<div id="f90" class="ch" style="left:349.50px;top:66px;letter-spacing:0.200px;">Favorites</div>
<div id="f91" class="ch" style="left:16.50px;top:99px;letter-spacing:-0.300px;color:#7f7c6b">A<u>d</u>dress</div>
<div id="f92" class="ch" style="left:82.10px;top:99px;letter-spacing:-0.054px;">C:\cod\SchoolYearlyTotalsSMARTEnhanced.htm</div>
<div id="f93" class="ch" style="left:805.50px;top:99px;letter-spacing:-0.800px;">Go</div>
<div id="f94" class="ch" style="left:702.70px;top:687px;letter-spacing:-0.350px;">My Computer</div>
</div>
</div>
</body></html>
